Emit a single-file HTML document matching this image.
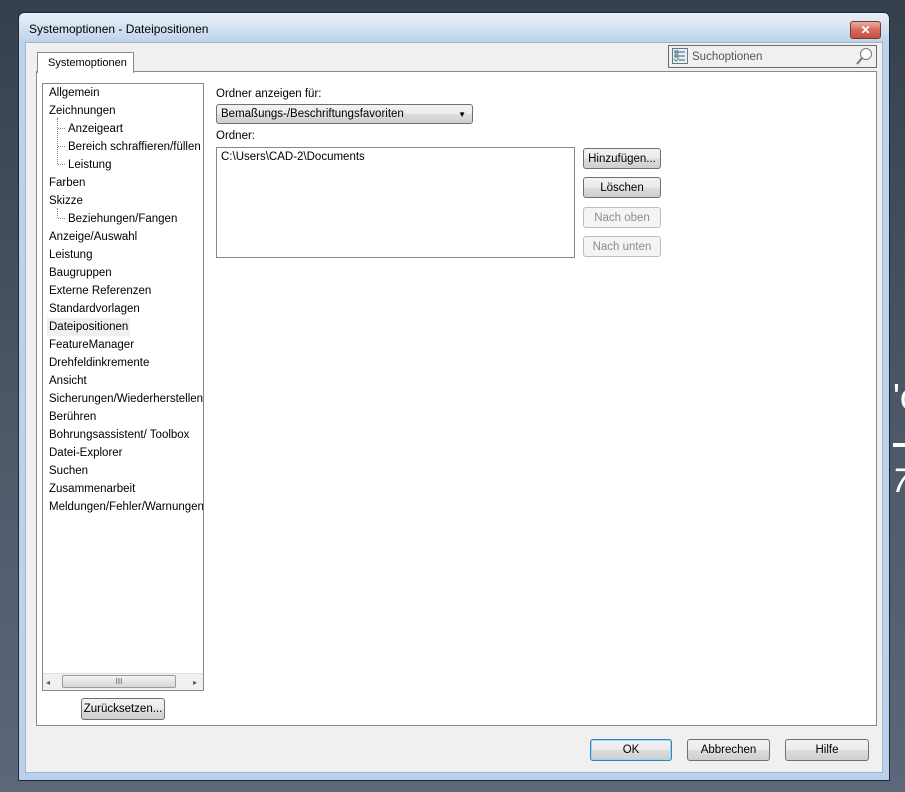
<!DOCTYPE html>
<html><head><meta charset="utf-8"><style>
*{margin:0;padding:0;box-sizing:border-box}
body{width:905px;height:792px;overflow:hidden;background:linear-gradient(#36404d,#4f5b6b 60%,#5c687a);font-family:"Liberation Sans",sans-serif;font-size:11.5px;color:#000;position:relative}
.a{position:absolute}
.win{left:18px;top:12px;width:872px;height:769px;background:linear-gradient(#e9f0f8,#bcd3ea 30px,#b9d1ea);border:1px solid #1c2836;border-radius:6px 6px 0 0}
.inner{left:25px;top:42px;width:858px;height:731px;background:#f0f0f0;border:1px solid #9fb4cc}
.btn{position:absolute;border:1px solid #707070;border-radius:3px;background:linear-gradient(#f2f2f2 0,#ebebeb 50%,#dddddd 51%,#cfcfcf);text-align:center;line-height:20px}
.dis{border-color:#bdbdbd;background:#f4f4f4;color:#8d8d8d}
.tree div{position:absolute;left:6px;white-space:nowrap;height:18px;line-height:18px}
.tree .s{left:25px}
.dot{position:absolute;border-left:1px dotted #888;}
.hd{position:absolute;border-top:1px dotted #888;width:7px}
</style></head><body>
<div class="a win"></div>
<div class="a" style="left:29px;top:22px;font-size:12px">Systemoptionen - Dateipositionen</div>
<div class="a" style="left:850px;top:21px;width:31px;height:18px;border:1px solid #7a3a32;border-radius:3px;background:linear-gradient(#e8b0a6,#d46a58 50%,#c4503c);color:#fff;font-weight:bold;text-align:center;line-height:16px;font-size:12px">✕</div>
<div class="a inner"></div>
<div class="a" style="left:668px;top:45px;width:209px;height:23px;border:1px solid #6a6a6a;background:#f0f0f0"></div>
<svg class="a" style="left:672px;top:48px" width="16" height="16"><rect x="0.5" y="0.5" width="15" height="15" fill="#e8f0f6" stroke="#5a7a90"/><rect x="3" y="3" width="3" height="2" fill="none" stroke="#456"/><line x1="7" y1="4" x2="13" y2="4" stroke="#456"/><rect x="3" y="7" width="3" height="2" fill="none" stroke="#456"/><line x1="7" y1="8" x2="13" y2="8" stroke="#456"/><path d="M2 11l2 2 3-3" stroke="#3a3" fill="none"/><line x1="7" y1="12" x2="13" y2="12" stroke="#456"/></svg>
<div class="a" style="left:692px;top:51px;color:#555">Suchoptionen</div>
<svg class="a" style="left:855px;top:47px" width="19" height="19"><circle cx="11" cy="7" r="5.5" fill="#fff" stroke="#777"/><line x1="7" y1="11" x2="2" y2="17" stroke="#777" stroke-width="2"/></svg>
<div class="a" style="left:36px;top:71px;width:841px;height:655px;background:#fff;border:1px solid #8a8a8a"></div>
<div class="a" style="left:37px;top:52px;width:97px;height:21px;background:#fff;border:1px solid #8a8a8a;border-bottom:none;padding:4px 0 0 10px;font-size:11px">Systemoptionen</div>
<div class="a tree" style="left:42px;top:83px;width:162px;height:608px;border:1px solid #828790;overflow:hidden;background:#fff">
<div style="top:0px">Allgemein</div>
<div style="top:18px">Zeichnungen</div>
<div class="s" style="top:36px">Anzeigeart</div>
<div class="s" style="top:54px">Bereich schraffieren/füllen</div>
<div class="s" style="top:72px">Leistung</div>
<div style="top:90px">Farben</div>
<div style="top:108px">Skizze</div>
<div class="s" style="top:126px">Beziehungen/Fangen</div>
<div style="top:144px">Anzeige/Auswahl</div>
<div style="top:162px">Leistung</div>
<div style="top:180px">Baugruppen</div>
<div style="top:198px">Externe Referenzen</div>
<div style="top:216px">Standardvorlagen</div>
<div style="top:234px;background:#f0f0f0;left:4px;padding:0 2px">Dateipositionen</div>
<div style="top:252px">FeatureManager</div>
<div style="top:270px">Drehfeldinkremente</div>
<div style="top:288px">Ansicht</div>
<div style="top:306px">Sicherungen/Wiederherstellen</div>
<div style="top:324px">Berühren</div>
<div style="top:342px">Bohrungsassistent/ Toolbox</div>
<div style="top:360px">Datei-Explorer</div>
<div style="top:378px">Suchen</div>
<div style="top:396px">Zusammenarbeit</div>
<div style="top:414px">Meldungen/Fehler/Warnungen</div>
<span class="dot" style="left:14px;top:34px;height:46px"></span>
<span class="hd" style="left:15px;top:44px"></span><span class="hd" style="left:15px;top:62px"></span><span class="hd" style="left:15px;top:80px"></span>
<span class="dot" style="left:14px;top:124px;height:10px"></span><span class="hd" style="left:15px;top:134px"></span>
<div style="left:0;top:589px;width:160px;height:17px;background:#f0f0f0;border-top:1px solid #e0e0e0"></div>
<div style="left:3px;top:590px;font-size:8px;color:#555">◂</div>
<div style="left:150px;top:590px;font-size:8px;color:#555">▸</div>
<div style="left:19px;top:591px;width:114px;height:13px;border:1px solid #9a9a9a;border-radius:2px;background:linear-gradient(#f3f3f3,#d8d8d8);line-height:11px;text-align:center;font-size:8px;color:#555">III</div>
</div>
<div class="btn" style="left:81px;top:698px;width:84px;height:22px">Zurücksetzen...</div>
<div class="a" style="left:216px;top:88px">Ordner anzeigen für:</div>
<div class="btn" style="left:216px;top:104px;width:257px;height:20px;text-align:left;padding-left:4px;line-height:19px">Bemaßungs-/Beschriftungsfavoriten<span style="position:absolute;right:6px;top:0;font-size:8px">▼</span></div>
<div class="a" style="left:216px;top:130px">Ordner:</div>
<div class="a" style="left:216px;top:147px;width:359px;height:111px;border:1px solid #828790;background:#fff;padding:3px 4px">C:\Users\CAD-2\Documents</div>
<div class="btn" style="left:583px;top:148px;width:78px;height:21px">Hinzufügen...</div>
<div class="btn" style="left:583px;top:177px;width:78px;height:21px">Löschen</div>
<div class="btn dis" style="left:583px;top:207px;width:78px;height:21px">Nach oben</div>
<div class="btn dis" style="left:583px;top:236px;width:78px;height:21px">Nach unten</div>
<div class="btn" style="left:590px;top:739px;width:82px;height:22px;border-color:#3c7fb1;box-shadow:inset 0 0 0 1px #9fd5f5">OK</div>
<div class="btn" style="left:687px;top:739px;width:83px;height:22px">Abbrechen</div>
<div class="btn" style="left:785px;top:739px;width:84px;height:22px">Hilfe</div>
<div class="a" style="left:893px;top:376px;color:#fff;font-size:36px;font-weight:100">'c</div>
<div class="a" style="left:893px;top:443px;width:12px;height:4px;background:#fff"></div>
<div class="a" style="left:892px;top:462px;color:#fff;font-size:34px;font-style:italic;font-weight:100">7</div>
</body></html>
